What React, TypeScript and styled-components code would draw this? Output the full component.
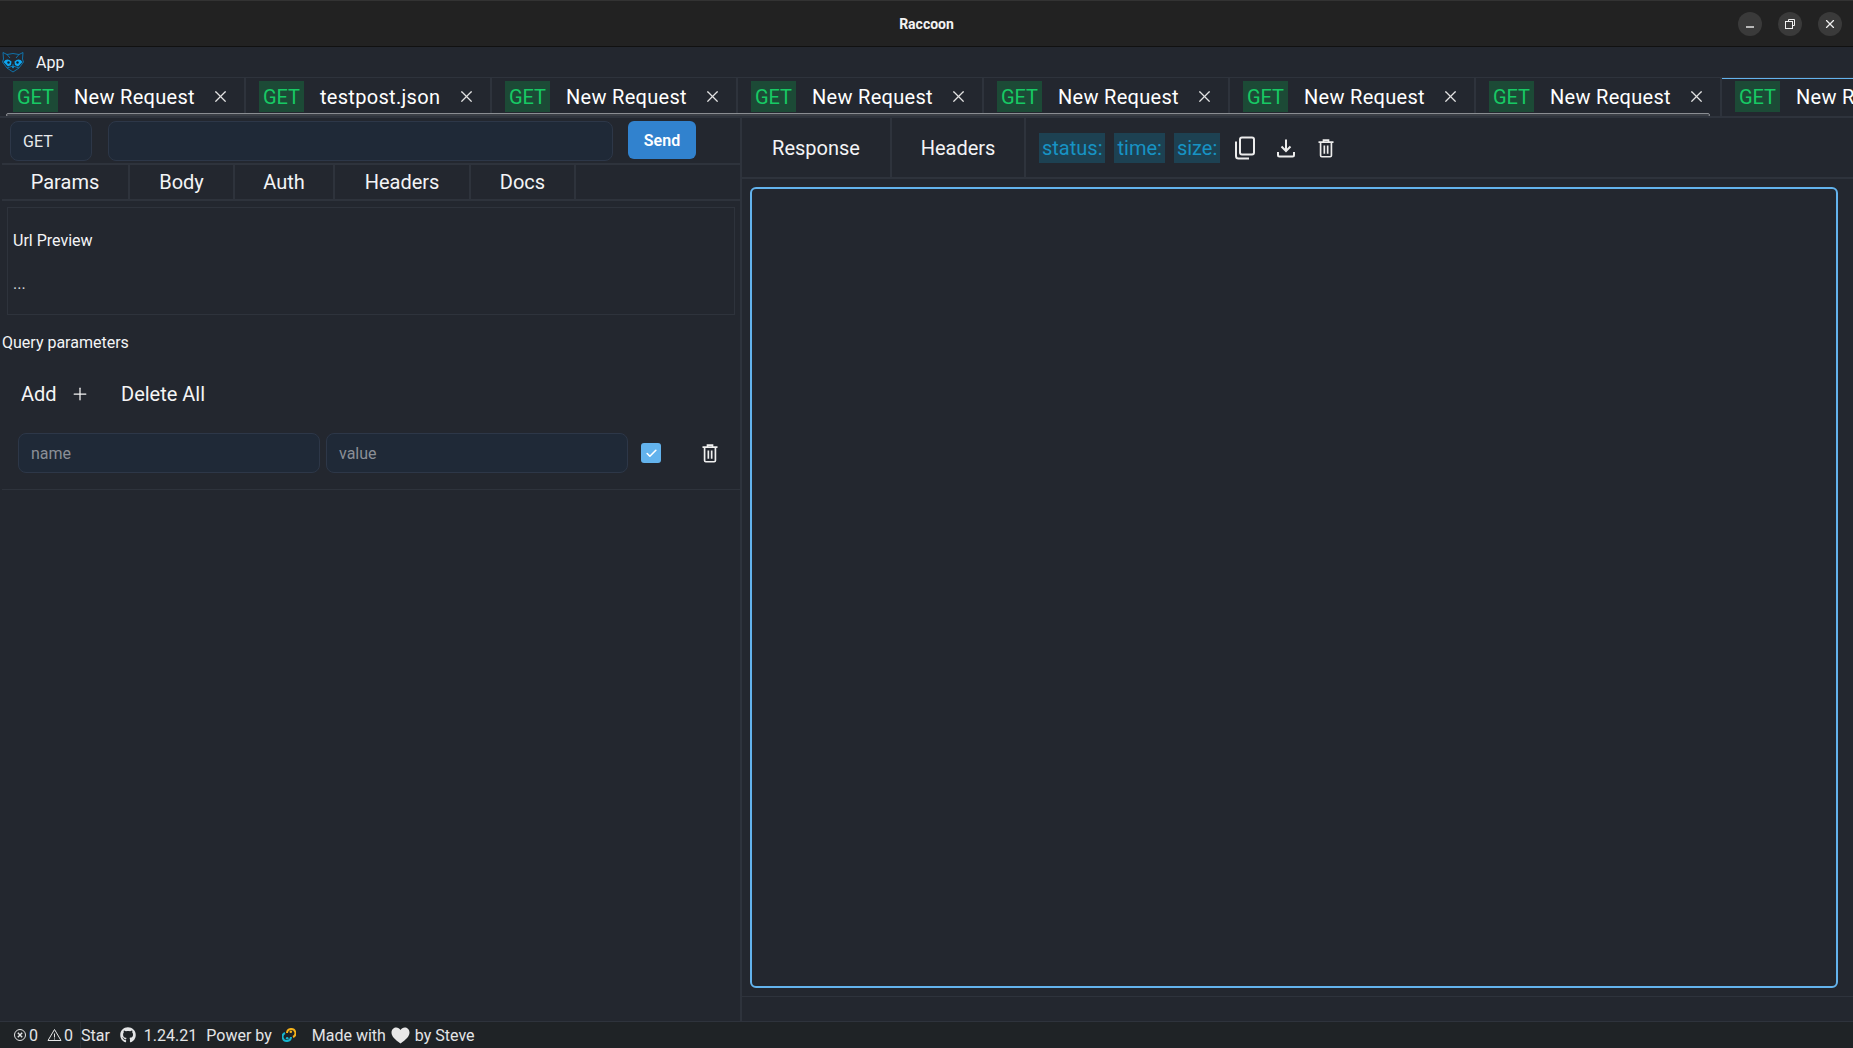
import styled, { createGlobalStyle } from "styled-components";
import { Plus, X, Check } from "lucide-react";
import { FaGithub } from "react-icons/fa";

const GlobalStyle = createGlobalStyle`
  html, body {
    margin: 0;
    padding: 0;
    height: 100%;
    background: #23272f;
    overflow: hidden;
  }
  * {
    box-sizing: border-box;
  }
`;

const Page = styled.div`
  width: 1853px;
  height: 1048px;
  display: flex;
  flex-direction: column;
  background: #23272f;
  color: #f3f4f6;
  font-family: Roboto, "Liberation Sans", sans-serif;
`;

const TitleBar = styled.header`
  height: 47px;
  flex: none;
  position: relative;
  display: flex;
  align-items: center;
  justify-content: center;
  background: #222222;
  border-top: 1px solid #333333;
  border-bottom: 1px solid #111111;
  font-size: 14px;
  font-weight: 700;
  color: #f2f2f2;
`;

const WindowButtons = styled.div`
  position: absolute;
  right: 11px;
  top: 11px;
  display: flex;
  gap: 16px;
`;

const WindowButton = styled.button`
  width: 24px;
  height: 24px;
  padding: 0;
  border: none;
  border-radius: 50%;
  background: #3a3a3a;
  color: #f0f0f0;
  display: flex;
  align-items: center;
  justify-content: center;
`;

const MenuBar = styled.div`
  height: 30px;
  flex: none;
  display: flex;
  align-items: center;
  padding-left: 2px;
  gap: 12px;
  font-size: 16px;
`;

const TabBar = styled.div`
  height: 41px;
  flex: none;
  position: relative;
  display: flex;
  overflow: hidden;
  border-top: 1px solid #2e333c;
  border-bottom: 2px solid #2e333c;
`;

const ScrollThumb = styled.div`
  position: absolute;
  left: 6px;
  top: 35px;
  width: 1704px;
  height: 4px;
  border: 1px solid #8a8d92;
  border-radius: 2px;
  background: #3a3e45;
`;

const RequestTab = styled.div<{ $active?: boolean }>`
  width: 246px;
  flex: none;
  display: flex;
  align-items: center;
  padding: 0 0 1px 13px;
  border-right: 2px solid #2e333c;
  box-shadow: ${(props) => (props.$active ? "inset 0 1px 0 #63b3ed" : "none")};
  font-size: 20px;
`;

const MethodBadge = styled.span`
  width: 45px;
  height: 31px;
  flex: none;
  display: flex;
  align-items: center;
  justify-content: center;
  background: #1c4a36;
  color: #17c964;
  font-size: 20px;
`;

const TabName = styled.span`
  margin-left: 16px;
  width: 122px;
  flex: none;
  white-space: nowrap;
  color: #ffffff;
  font-size: 20px;
  letter-spacing: 0.3px;
`;

const TabClose = styled.span`
  margin-left: 15px;
  display: flex;
  color: #e2e2e2;
`;

const Main = styled.main`
  flex: 1;
  min-height: 0;
  display: flex;
`;

const LeftPanel = styled.section`
  width: 742px;
  flex: none;
  display: flex;
  flex-direction: column;
  padding-left: 2px;
  border-right: 2px solid #2e333c;
`;

const RequestRow = styled.div`
  height: 47px;
  flex: none;
  display: flex;
  align-items: center;
  padding: 3px 0 2px 8px;
  border-bottom: 2px solid #2e333c;
`;

const MethodSelect = styled.div`
  width: 82px;
  height: 40px;
  display: flex;
  align-items: center;
  padding-left: 12px;
  border: 1px solid #2d3748;
  border-radius: 8px;
  background: #1f2937;
  font-size: 16px;
  color: #e6e8eb;
`;

const UrlInput = styled.div`
  width: 505px;
  height: 40px;
  margin-left: 16px;
  border: 1px solid #2d3748;
  border-radius: 8px;
  background: #1f2937;
`;

const SendButton = styled.button`
  width: 68px;
  height: 38px;
  margin-left: 15px;
  margin-top: -2px;
  border: none;
  border-radius: 6px;
  background: #3182ce;
  color: #ffffff;
  font-family: inherit;
  font-size: 16px;
  font-weight: 600;
`;

const SubTabs = styled.nav`
  height: 36px;
  flex: none;
  display: flex;
  border-bottom: 2px solid #2e333c;
`;

const SubTab = styled.div<{ $width: number }>`
  width: ${(props) => props.$width}px;
  display: flex;
  align-items: center;
  justify-content: center;
  border-right: 2px solid #2e333c;
  font-size: 20px;
  color: #f3f4f6;
`;

const PreviewBox = styled.div`
  height: 108px;
  margin: 6px 5px 0 5px;
  padding: 23px 5px 0;
  border: 1px solid #2e333c;
  font-size: 16px;
`;

const PreviewValue = styled.div`
  margin-top: 24px;
  color: #d5d7da;
`;

const SectionTitle = styled.div`
  margin-top: 18px;
  font-size: 16px;
  line-height: 20px;
`;

const Params = styled.div`
  padding: 0 0 16px 0;
  border-bottom: 1px solid #2e333c;
`;

const ActionRow = styled.div`
  display: flex;
  align-items: center;
  height: 40px;
  margin-top: 21px;
  padding-left: 19px;
  font-size: 20px;
  color: #f5f5f5;
`;

const AddLabel = styled.span`
  display: flex;
  align-items: center;
  gap: 13px;
  width: 100px;
`;

const ParamRow = styled.div`
  display: flex;
  align-items: center;
  margin-top: 19px;
  padding-left: 16px;
`;

const ParamInput = styled.div`
  width: 302px;
  height: 40px;
  margin-right: 6px;
  display: flex;
  align-items: center;
  padding-left: 12px;
  border: 1px solid #2d3748;
  border-radius: 8px;
  background: #1f2937;
  color: #8b8f96;
  font-size: 16px;
`;

const Checkbox = styled.span`
  width: 20px;
  height: 20px;
  margin-left: 7px;
  display: flex;
  align-items: center;
  justify-content: center;
  border-radius: 3px;
  background: #63b3ed;
  color: #ffffff;
`;

const DeleteSlot = styled.span`
  margin-left: 39px;
  display: flex;
  color: #f0f0f0;
`;

const RightPanel = styled.section`
  flex: 1;
  min-width: 0;
  display: flex;
  flex-direction: column;
`;

const ResponseHeader = styled.div`
  height: 61px;
  flex: none;
  display: flex;
  align-items: center;
  border-bottom: 2px solid #2e333c;
`;

const ResponseTab = styled.div<{ $width: number }>`
  width: ${(props) => props.$width}px;
  height: 100%;
  display: flex;
  align-items: center;
  justify-content: center;
  border-right: 2px solid #2e333c;
  font-size: 20px;
`;

const Stats = styled.div`
  display: flex;
  align-items: center;
  margin-left: 13px;
  gap: 9px;
`;

const StatBadge = styled.span`
  height: 30px;
  padding: 0 3px;
  display: flex;
  align-items: center;
  background: #1d4152;
  color: #1793c4;
  font-size: 20px;
`;

const ResponseIcons = styled.div`
  display: flex;
  align-items: center;
  gap: 20px;
  margin-left: 14px;
  color: #ececec;
`;

const ResponseBody = styled.div`
  flex: 1;
  min-height: 0;
  padding: 8px 15px 8px 8px;
  border-bottom: 1px solid #2e333c;
  margin-bottom: 24px;
`;

const Editor = styled.div`
  height: 100%;
  border: 2px solid #63b3ed;
  border-radius: 6px;
`;

const StatusBar = styled.footer`
  height: 27px;
  flex: none;
  display: flex;
  align-items: center;
  background: #1f2326;
  border-top: 1px solid #2e333c;
  font-size: 16px;
  color: #e4e5e6;
`;

const Problems = styled.div`
  width: 81px;
  height: 100%;
  flex: none;
  display: flex;
  align-items: center;
  padding-left: 13px;
  gap: 2px;
  border-right: 1px solid #2a2e33;
`;

const ProblemCount = styled.span`
  margin-right: 7px;
`;

const StatusItem = styled.span<{ $gap?: number }>`
  margin-left: ${(props) => props.$gap ?? 0}px;
  display: flex;
  align-items: center;
`;

const TrashIcon = ({ size = 20 }: { size?: number }) => (
  <svg width={size} height={size} viewBox="0 0 24 24" fill="none" stroke="currentColor" strokeWidth="2">
    <path d="M3 5h18M9 5V2.5h6V5M5.5 5v16a1.5 1.5 0 0 0 1.5 1.5h10a1.5 1.5 0 0 0 1.5-1.5V5M10 9v10M14 9v10" />
  </svg>
);

const CopyIcon = () => (
  <svg width="22" height="24" viewBox="0 0 22 24" fill="none" stroke="currentColor" strokeWidth="2">
    <rect x="6" y="1.5" width="14" height="17" rx="2" />
    <path d="M2 5.5V20a2.5 2.5 0 0 0 2.5 2.5H15" />
  </svg>
);

const DownloadIcon = () => (
  <svg width="20" height="20" viewBox="0 0 20 20" fill="none" stroke="currentColor" strokeWidth="2">
    <path d="M10 1.5v11M5.5 8.5 10 13l4.500-4.500M2 14v3a1.500 1.500 0 0 0 1.500 1.500h13A1.500 1.500 0 0 0 18 17v-3" />
  </svg>
);

const RaccoonLogo = () => (
  <svg width="22" height="22" viewBox="0 0 22 22" fill="none" stroke="#0b84c6" strokeWidth="0.8">
    <path d="M1 1.500 5 3.500Q11 1.500 17 3.500L21 1.500 20.500 8 21.500 11 17 17 11 21 5 17 0.500 11 1.500 8Z" />
    <path d="M5 3.500 8 7M17 3.500 14 7M11 13v3M5 17l6-2 6 2" />
    <path d="M1.500 11Q5 6.500 9.500 10.500L9 14 6 15.500ZM20.500 11Q17 6.500 12.500 10.500L13 14 16 15.500Z" fill="#0ea5f0" stroke="none" />
    <circle cx="6.500" cy="11.500" r="1.200" fill="#12202c" stroke="none" />
    <circle cx="15.500" cy="11.500" r="1.200" fill="#12202c" stroke="none" />
    <path d="M9.500 15.500h3L11 17.500Z" fill="#0ea5f0" stroke="none" />
  </svg>
);

const ErrorIcon = () => (
  <svg width="14" height="14" viewBox="0 0 14 14" fill="none" stroke="currentColor" strokeWidth="1">
    <circle cx="7" cy="7" r="5.500" />
    <path d="M4.800 4.800l4.400 4.400M9.200 4.800l-4.400 4.400" strokeWidth="1.400" />
  </svg>
);

const WarningIcon = () => (
  <svg width="15" height="14" viewBox="0 0 15 14" fill="none" stroke="currentColor" strokeWidth="1">
    <path d="M7.500 1.500 14 12.500H1Z" />
    <path d="M7.500 5.500v4M7.500 10.500v1" />
  </svg>
);

const TauriLogo = () => (
  <svg width="14" height="16" viewBox="0 0 14 16" fill="none" strokeWidth="2">
    <path d="M5 6A4.200 4.200 0 1 1 11 10" stroke="#f5b21a" />
    <circle cx="8.800" cy="4.800" r="1.300" fill="#f5b21a" />
    <path d="M9 10A4.200 4.200 0 1 1 3 6" stroke="#16b5cf" />
    <circle cx="5.200" cy="11.200" r="1.300" fill="#16b5cf" />
  </svg>
);

const Heart = () => (
  <svg width="19" height="17" viewBox="0 0 19 17" fill="#e8e8e8">
    <path d="M9.500 16.500C4 12.500 0.500 9.500 0.500 5.500 0.500 2.500 2.800 0.500 5.300 0.500 7 0.500 8.600 1.400 9.500 3 10.400 1.400 12 0.500 13.700 0.500 16.200 0.500 18.500 2.500 18.500 5.500 18.500 9.500 15 12.500 9.500 16.500Z" />
  </svg>
);

const tabNames = [
  "New Request",
  "testpost.json",
  "New Request",
  "New Request",
  "New Request",
  "New Request",
  "New Request",
  "New Request",
];

const subTabs = [
  { label: "Params", width: 128 },
  { label: "Body", width: 105 },
  { label: "Auth", width: 100 },
  { label: "Headers", width: 136 },
  { label: "Docs", width: 105 },
];

function App() {
  return (
    <Page>
      <GlobalStyle />
      <TitleBar>
        Raccoon
        <WindowButtons>
          <WindowButton>
            <svg width="10" height="10" viewBox="0 0 10 10" stroke="currentColor" strokeWidth="1.400">
              <path d="M1 8h8" />
            </svg>
          </WindowButton>
          <WindowButton>
            <svg width="10" height="10" viewBox="0 0 10 10" fill="none" stroke="currentColor">
              <path d="M3.500 2V.500h6v6H8" />
              <rect x=".5" y="2.500" width="7" height="7" />
            </svg>
          </WindowButton>
          <WindowButton>
            <X size={14} />
          </WindowButton>
        </WindowButtons>
      </TitleBar>
      <MenuBar>
        <RaccoonLogo />
        App
      </MenuBar>
      <TabBar>
        {tabNames.map((name, i) => (
          <RequestTab key={i} $active={i === tabNames.length - 1}>
            <MethodBadge>GET</MethodBadge>
            <TabName>{name}</TabName>
            <TabClose>
              <X size={19} strokeWidth={1.5} />
            </TabClose>
          </RequestTab>
        ))}
        <ScrollThumb />
      </TabBar>
      <Main>
        <LeftPanel>
          <RequestRow>
            <MethodSelect>GET</MethodSelect>
            <UrlInput />
            <SendButton>Send</SendButton>
          </RequestRow>
          <SubTabs>
            {subTabs.map((tab) => (
              <SubTab key={tab.label} $width={tab.width}>
                {tab.label}
              </SubTab>
            ))}
          </SubTabs>
          <PreviewBox>
            Url Preview
            <PreviewValue>...</PreviewValue>
          </PreviewBox>
          <Params>
            <SectionTitle>Query parameters</SectionTitle>
            <ActionRow>
              <AddLabel>
                Add <Plus size={20} strokeWidth={1.5} />
              </AddLabel>
              Delete All
            </ActionRow>
            <ParamRow>
              <ParamInput>name</ParamInput>
              <ParamInput>value</ParamInput>
              <Checkbox>
                <Check size={13} strokeWidth={3} />
              </Checkbox>
              <DeleteSlot>
                <TrashIcon />
              </DeleteSlot>
            </ParamRow>
          </Params>
        </LeftPanel>
        <RightPanel>
          <ResponseHeader>
            <ResponseTab $width={150}>Response</ResponseTab>
            <ResponseTab $width={134}>Headers</ResponseTab>
            <Stats>
              <StatBadge>status:</StatBadge>
              <StatBadge>time:</StatBadge>
              <StatBadge>size:</StatBadge>
            </Stats>
            <ResponseIcons>
              <CopyIcon />
              <DownloadIcon />
              <TrashIcon />
            </ResponseIcons>
          </ResponseHeader>
          <ResponseBody>
            <Editor />
          </ResponseBody>
        </RightPanel>
      </Main>
      <StatusBar>
        <Problems>
          <ErrorIcon />
          <ProblemCount>0</ProblemCount>
          <WarningIcon />0
        </Problems>
        <StatusItem>Star</StatusItem>
        <StatusItem $gap={10}>
          <FaGithub size={16} />
        </StatusItem>
        <StatusItem $gap={8}>1.24.21</StatusItem>
        <StatusItem $gap={9}>Power by</StatusItem>
        <StatusItem $gap={10}>
          <TauriLogo />
        </StatusItem>
        <StatusItem $gap={16}>Made with</StatusItem>
        <StatusItem $gap={5}>
          <Heart />
        </StatusItem>
        <StatusItem $gap={5}>by Steve</StatusItem>
      </StatusBar>
    </Page>
  );
}

export default App;
